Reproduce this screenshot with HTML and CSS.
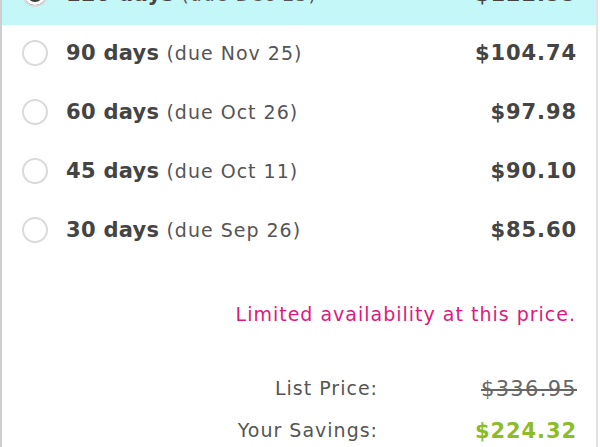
FILE: index.html
```html
<!doctype html>
<html lang="en">
<head>
    <meta charset="UTF-8">
    <title>Payment options</title>
    <link rel="stylesheet" href="styles.css">
</head>
<body>
<div class="panel">
    <div class="options">
        <div class="option selected">
            <span class="radio"></span>
            <span class="term"><b>120 days</b> (due Dec 25)</span>
            <span class="price">$122.55</span>
        </div>
        <div class="option">
            <span class="radio"></span>
            <span class="term"><b>90 days</b> (due Nov 25)</span>
            <span class="price">$104.74</span>
        </div>
        <div class="option">
            <span class="radio"></span>
            <span class="term"><b>60 days</b> (due Oct 26)</span>
            <span class="price">$97.98</span>
        </div>
        <div class="option">
            <span class="radio"></span>
            <span class="term"><b>45 days</b> (due Oct 11)</span>
            <span class="price">$90.10</span>
        </div>
        <div class="option">
            <span class="radio"></span>
            <span class="term"><b>30 days</b> (due Sep 26)</span>
            <span class="price">$85.60</span>
        </div>
    </div>
    <p class="limited">Limited availability at this price.</p>
    <div class="summary">
        <span class="label">List Price:</span>
        <span class="value list">$336.95</span>
        <span class="label">Your Savings:</span>
        <span class="value savings">$224.32</span>
    </div>
</div>
</body>
</html>
```

FILE: styles.css
```css
body{
    margin: 0;
    font-family: "DejaVu Sans", "Open Sans", sans-serif;
    color: #444;
    background: #fff;
}
.panel{
    width: 594px;
    height: 500px;
    margin-top: -37px;
    border-left: 2px solid #cfcfcf;
    border-right: 2px solid #e2e2e2;
}
.option{
    display: flex;
    align-items: center;
    height: 59px;
    padding: 0 20px 4px;
    box-sizing: border-box;
}
.option.selected{
    background: #c4f8f8;
    height: 62px;
    padding-bottom: 0;
}
.radio{
    width: 22px;
    height: 22px;
    border: 2px solid #dadada;
    border-radius: 50%;
    background: #fff;
    flex: none;
}
.selected .radio{
    background: #3a3a3a;
    box-shadow: inset 0 0 0 3px #fff;
}
.term{
    margin-left: 18px;
    font-size: 19px;
    letter-spacing: 1px;
    color: #555;
    flex: 1;
}
.term b{
    font-size: 21px;
    letter-spacing: 0.3px;
    color: #444;
}
.price{
    font-size: 21px;
    font-weight: bold;
    letter-spacing: 0.9px;
    margin-right: -1px;
}
.limited{
    margin: 42px 20px 0 0;
    text-align: right;
    color: #e0187c;
    font-size: 19px;
    letter-spacing: 1px;
}
.summary{
    display: grid;
    grid-template-columns: 1fr 198px;
    row-gap: 18px;
    margin-top: 52px;
    padding-right: 20px;
    font-size: 19px;
    letter-spacing: 1px;
}
.label{
    text-align: right;
    color: #555;
}
.value{
    text-align: right;
    font-size: 21px;
    margin-right: -1px;
}
.list{
    text-decoration: line-through;
    letter-spacing: 1.3px;
    color: #666;
}
.savings{
    color: #8bbd2a;
    font-weight: bold;
    letter-spacing: 0.9px;
}
```
